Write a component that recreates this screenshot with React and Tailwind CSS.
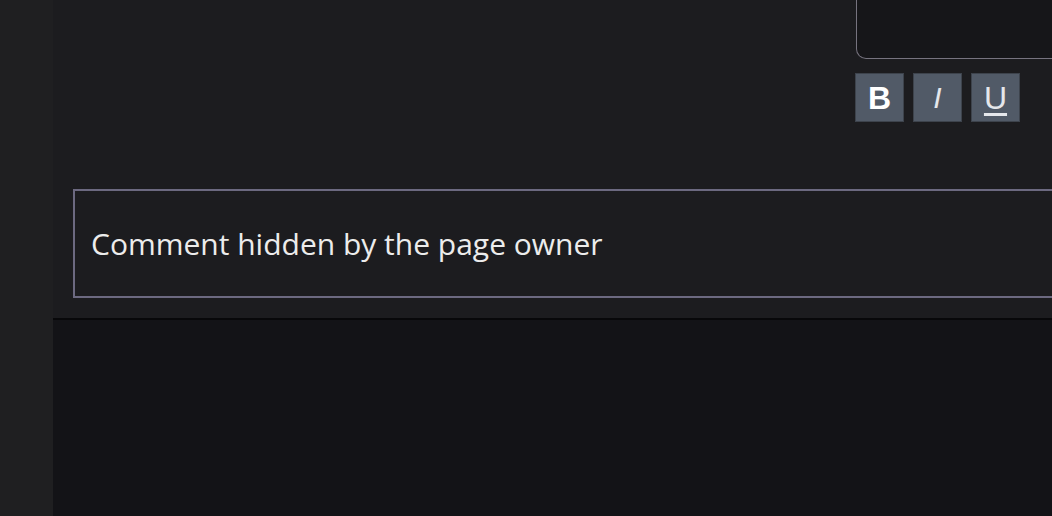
export default function App() {
  return (
    <div className="flex h-[516px] w-[1052px] overflow-hidden bg-[#131317]" style={{ fontFamily: '"Open Sans", "Noto Sans", sans-serif' }}>
      {/* left rail */}
      <div className="w-[53px] shrink-0 bg-[#1f1f21] shadow-[4px_0_10px_rgba(0,0,0,0.35)]" />

      <div className="flex min-w-0 flex-1 flex-col">
        {/* comment panel */}
        <div className="flex h-[320px] shrink-0 flex-col border-b-2 border-[#08080a] bg-[#1c1c1f] pl-[20px]">
          <div className="flex justify-end">
            <div className="-mr-[40px] h-[59px] w-[236px] rounded-bl-[10px] border border-t-0 border-[#76737f] bg-[#161619]" />
          </div>

          <div className="mt-[14px] flex gap-[9px] pl-[782px] font-['Liberation_Sans',Arial,sans-serif]">
            <button className="flex h-[49px] w-[49px] items-center justify-center border border-[#3d434c] bg-[#515a67] text-[32px] font-bold text-white">
              B
            </button>
            <button className="flex h-[49px] w-[49px] items-center justify-center border border-[#3d434c] bg-[#515a67] text-[30px] italic text-[#e5e7eb]">
              I
            </button>
            <button className="flex h-[49px] w-[49px] items-center justify-center border border-[#3d434c] bg-[#515a67] text-[32px] text-[#e5e7eb] underline decoration-[3px] underline-offset-[4px]">
              U
            </button>
          </div>

          <div className="mt-[67px] -mr-[20px] flex h-[109px] items-center border-2 border-r-0 border-[#6c6980] pl-[16px]">
            <span className="text-[30px] text-[#ececec]">Comment hidden by the page owner</span>
          </div>
        </div>

        {/* lower area */}
        <div className="flex-1 bg-[#131317]" />
      </div>
    </div>
  );
}
